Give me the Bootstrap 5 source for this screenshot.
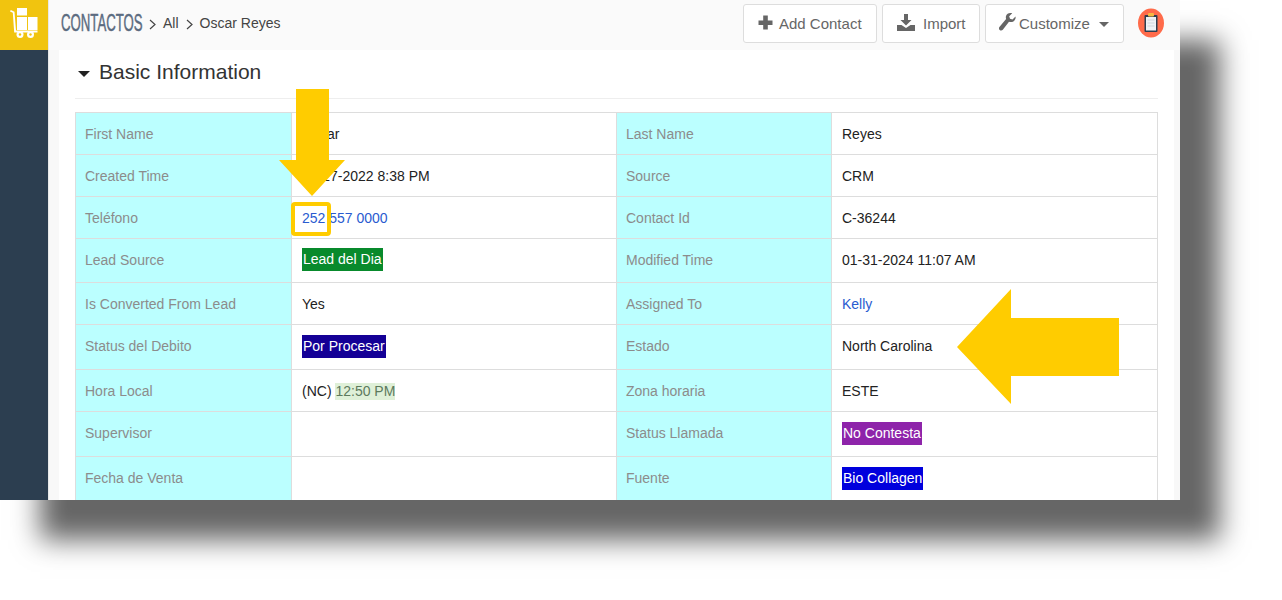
<!DOCTYPE html>
<html lang="es">
<head>
    <meta charset="UTF-8">
    <title>Contactos - Oscar Reyes</title>
    <link href="https://cdn.jsdelivr.net/npm/bootstrap@5.3.0/dist/css/bootstrap.min.css" rel="stylesheet">
    <style>
        html, body { height: 600px; overflow: hidden; background: #fff; }
        body { font-family: "Liberation Sans", Arial, sans-serif; font-size: 14px; color: #222; }
        .marco { width: 1180px; height: 500px; overflow: hidden; box-shadow: 40px 40px 26px #666; background: #fff; }
        .envoltura { position: relative; width: 1180px; height: 500px; }
        .lateral { width: 48px; background: #2c3e50; flex: none; }
        .logo-caja { height: 50px; background: #f1c40f; }
        .principal { min-width: 0; border-left: 1px solid #e8e8e8; }
        .cabecera { height: 50px; background: #fafafa; padding: 4px 16px 0 12px; }
        .modulo { display: inline-block; width: 81px; font-size: 24px; color: #5b6b80; line-height: 38px; transform: scaleX(.55); transform-origin: left center; white-space: nowrap; -webkit-text-stroke: .5px #5b6b80; }
        .miga { color: #444; font-size: 14px; line-height: 38px; }
        .flecha-miga { width: 7px; height: 11px; margin: 0 7px 6px; flex: none; }
        .boton-barra { height: 39px; padding-top: 2px; font-size: 15px; color: #666; background: #fff; border: 1px solid #ddd; border-radius: 3px; display: flex; align-items: center; white-space: nowrap; }
        .boton-barra svg { margin-bottom: 4px; }
        .barra-botones { gap: 5px; }
        .b-agregar { width: 134px; padding-left: 14px; gap: 6px; }
        .b-importar { width: 98px; padding-left: 14px; gap: 8px; }
        .b-ajustes { width: 139px; padding-left: 13px; gap: 3px; }
        .flechita-menu { width: 0; height: 0; border-left: 5px solid transparent; border-right: 5px solid transparent; border-top: 5px solid #666; margin: 0 0 0 6px; }
        .avatar-nota { width: 26px; height: 30px; margin-left: 14px; margin-top: 4px; }
        .fondo { background: #f8f8f8; padding: 0 6px 0 10px; }
        .tarjeta { background: #fff; padding: 0 16px 0 16px; height: 450px; }
        .titulo-seccion { height: 49px; border-bottom: 1px solid #eee; margin-bottom: 13px; font-size: 21px; color: #333; padding-bottom: 4px; }
        .triangulo { width: 0; height: 0; border-left: 6px solid transparent; border-right: 6px solid transparent; border-top: 6px solid #222; margin: 3px 9px 0 3px; }
        .tabla-datos { table-layout: fixed; width: 1082px; margin: 0; border-color: #ddd; }
        .tabla-datos td { padding: 0 9px 0 10px; height: 42px; vertical-align: middle; font-size: 14px; color: #222; box-shadow: none; background: #fff; line-height: 20px; }
        .tabla-datos td.etiqueta { background: #bbffff; color: #8c8c8c; padding-left: 9px; }
        .alta-44 td { height: 44px !important; padding-bottom: 2px !important; }
        .alta-45 td { height: 45px !important; padding-bottom: 2px !important; }
        .tabla-datos a { color: #2a5bd0; text-decoration: none; }
        .marca { display: inline-block; padding: 0 1px; line-height: 23px; color: #fff; }
        .m-verde { background: #088a2c; }
        .m-azul { background: #140096; }
        .m-morado { background: #8e24aa; }
        .m-azul2 { background: #0000dd; }
        .m-hora { background: #dff0d8; color: #5d7a5d; line-height: 17px; }
        .anotacion { position: absolute; left: 0; top: 0; width: 1180px; height: 500px; pointer-events: none; }
    </style>
</head>
<body>
<div class="marco">
    <div class="envoltura d-flex">
        <div class="lateral">
            <div class="logo-caja">
                <svg width="48" height="50" viewBox="0 0 48 50" fill="#fff">
                    <rect x="17" y="8" width="10" height="7.500"/>
                    <rect x="17" y="17" width="10" height="13"/>
                    <rect x="28" y="17" width="9.500" height="13"/>
                    <path d="M10 11.500l.8-1.500 3.700 1.800 1.500 18.700h21.500v2H14.200L12.800 12.800z"/>
                    <circle cx="20" cy="34.500" r="3.500"/>
                    <circle cx="30.500" cy="34.500" r="3.500"/>
                    <circle cx="20" cy="34.500" r="1.200" fill="#f1c40f"/>
                    <circle cx="30.500" cy="34.500" r="1.200" fill="#f1c40f"/>
                </svg>
            </div>
        </div>
        <div class="principal flex-grow-1">
            <div class="cabecera d-flex align-items-start">
                <span class="modulo">CONTACTOS</span>
                <svg class="flecha-miga align-self-center" viewBox="0 0 7 11" fill="none" stroke="#444" stroke-width="1.200"><path d="M1 1l5 4.500-5 4.500"/></svg>
                <span class="miga">All</span>
                <svg class="flecha-miga align-self-center" viewBox="0 0 7 11" fill="none" stroke="#444" stroke-width="1.200"><path d="M1 1l5 4.500-5 4.500"/></svg>
                <span class="miga">Oscar Reyes</span>
                <div class="ms-auto d-flex barra-botones">
                    <button class="boton-barra b-agregar" type="button">
                        <svg width="15" height="15" viewBox="0 0 15 15" fill="#666"><path d="M5.200 .5h4.600v5H14.500v4.600H9.800v4.400H5.200v-4.400H.5V5.500h4.700z"/></svg>
                        Add Contact
                    </button>
                    <button class="boton-barra b-importar" type="button">
                        <svg width="18" height="17" viewBox="0 0 18 17" fill="#666"><path d="M7 0h4v6h3.500L9 11.500 3.500 6H7z"/><path d="M0 11h4.500L9 14l4.500-3H18v6H0z"/></svg>
                        Import
                    </button>
                    <button class="boton-barra b-ajustes" type="button">
                        <svg width="17" height="18" viewBox="0 0 17 18" fill="#666"><path d="M16.500 3.500l-3 3-2.500-.8-.8-2.500 3-3C10.500-.5 7.800.6 7 3c-.3 1-.2 2 .1 2.900L.6 13.800c-.9 1-.8 2.400.1 3.200.9.800 2.300.7 3.100-.3l6.200-7.900c2.600.8 5.200-.2 6.200-2.600.4-.9.500-1.800.3-2.700z"/></svg>
                        Customize
                        <span class="flechita-menu"></span>
                    </button>
                </div>
                <svg class="avatar-nota" viewBox="0 0 26 30">
                    <ellipse cx="13" cy="15" rx="13" ry="14.500" fill="#ff6b4a"/>
                    <rect x="6.500" y="7" width="13" height="17" rx="1" fill="#2c3e50"/>
                    <rect x="8" y="9" width="10" height="13.500" fill="#eef1f4"/>
                    <rect x="10" y="5" width="6" height="3.500" rx="1" fill="#f5b942"/>
                    <path d="M9.500 12h7M9.500 15h7M9.500 18h7" stroke="#cfd6dc" stroke-width="1"/>
                </svg>
            </div>
            <div class="fondo">
                <div class="tarjeta">
                    <div class="titulo-seccion d-flex align-items-center">
                        <span class="triangulo"></span>
                        <span>Basic Information</span>
                    </div>
                    <table class="table table-bordered tabla-datos">
                        <colgroup><col style="width:216px"><col style="width:325px"><col style="width:215px"><col style="width:326px"></colgroup>
                        <tbody>
                            <tr><td class="etiqueta">First Name</td><td>Oscar</td><td class="etiqueta">Last Name</td><td>Reyes</td></tr>
                            <tr><td class="etiqueta">Created Time</td><td>01-27-2022 8:38 PM</td><td class="etiqueta">Source</td><td>CRM</td></tr>
                            <tr><td class="etiqueta">Teléfono</td><td><a href="#">252 557 0000</a></td><td class="etiqueta">Contact Id</td><td>C-36244</td></tr>
                            <tr class="alta-44"><td class="etiqueta">Lead Source</td><td><span class="marca m-verde">Lead del Dia</span></td><td class="etiqueta">Modified Time</td><td>01-31-2024 11:07 AM</td></tr>
                            <tr><td class="etiqueta">Is Converted From Lead</td><td>Yes</td><td class="etiqueta">Assigned To</td><td><a href="#">Kelly</a></td></tr>
                            <tr class="alta-45"><td class="etiqueta">Status del Debito</td><td><span class="marca m-azul">Por Procesar</span></td><td class="etiqueta">Estado</td><td>North Carolina</td></tr>
                            <tr><td class="etiqueta">Hora Local</td><td>(NC) <span class="m-hora d-inline-block">12:50 PM</span></td><td class="etiqueta">Zona horaria</td><td>ESTE</td></tr>
                            <tr class="alta-45"><td class="etiqueta">Supervisor</td><td></td><td class="etiqueta">Status Llamada</td><td><span class="marca m-morado">No Contesta</span></td></tr>
                            <tr class="alta-45"><td class="etiqueta">Fecha de Venta</td><td></td><td class="etiqueta">Fuente</td><td><span class="marca m-azul2">Bio Collagen</span></td></tr>
                        </tbody>
                    </table>
                </div>
            </div>
        </div>
        <svg class="anotacion" viewBox="0 0 1180 500">
            <rect x="293" y="204" width="36" height="30" rx="2" fill="none" stroke="#ffcc00" stroke-width="4"/>
            <path d="M296 89h33v71h16l-33 36-33-36h17z" fill="#ffcc00"/>
            <path d="M957 347l54-58v29h108v58h-108v28z" fill="#ffcc00"/>
        </svg>
    </div>
</div>
<script src="https://cdn.jsdelivr.net/npm/bootstrap@5.3.0/dist/js/bootstrap.bundle.min.js"></script>
</body>
</html>
